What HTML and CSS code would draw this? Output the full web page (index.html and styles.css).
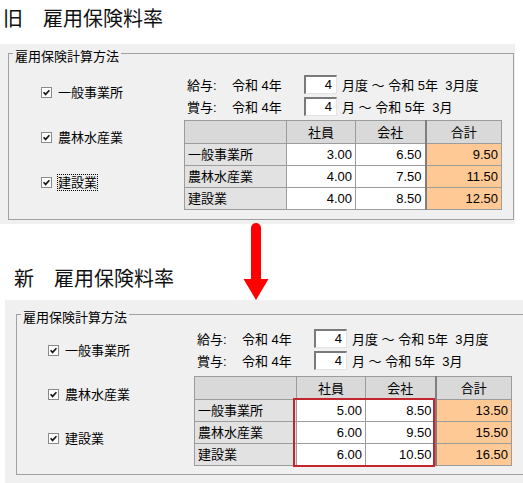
FILE: index.html
```html
<!DOCTYPE html>
<html lang="ja">
<head>
<meta charset="utf-8">
<title>雇用保険料率</title>
<link rel="stylesheet" href="styles.css">
</head>
<body>
<div class="page">
  <section class="block block--old">
    <h1 class="title">旧　雇用保険料率</h1>
    <div class="panel">
      <fieldset class="group">
        <legend class="group__legend">雇用保険計算方法</legend>
        <div class="group__body">
          <ul class="checks">
            <li class="check"><svg class="check__box" viewBox="0 0 11 11" width="11" height="11"><rect x="0.5" y="0.5" width="10" height="10" fill="#fff" stroke="#8a8a8a"/><path d="M2.6 5.2 L4.6 7.4 L8.4 3.2" fill="none" stroke="#1a1a1a" stroke-width="1.7"/></svg><span class="check__label">一般事業所</span></li>
            <li class="check"><svg class="check__box" viewBox="0 0 11 11" width="11" height="11"><rect x="0.5" y="0.5" width="10" height="10" fill="#fff" stroke="#8a8a8a"/><path d="M2.6 5.2 L4.6 7.4 L8.4 3.2" fill="none" stroke="#1a1a1a" stroke-width="1.7"/></svg><span class="check__label">農林水産業</span></li>
            <li class="check"><svg class="check__box" viewBox="0 0 11 11" width="11" height="11"><rect x="0.5" y="0.5" width="10" height="10" fill="#fff" stroke="#8a8a8a"/><path d="M2.6 5.2 L4.6 7.4 L8.4 3.2" fill="none" stroke="#1a1a1a" stroke-width="1.7"/></svg><span class="check__label check__label--focus">建設業</span></li>
          </ul>
          <div class="settings">
            <div class="period">
              <span class="period__label">給与:</span>
              <span class="period__era">令和 4年</span>
              <span class="period__input">4</span>
              <span class="period__rest">月度 ～ 令和 5年&nbsp;&nbsp;3月度</span>
            </div>
            <div class="period">
              <span class="period__label">賞与:</span>
              <span class="period__era">令和 4年</span>
              <span class="period__input">4</span>
              <span class="period__rest">月 ～ 令和 5年&nbsp;&nbsp;3月</span>
            </div>
            <div class="table-wrap">
              <table class="rates">
                <colgroup><col class="c-label"><col class="c-num"><col class="c-num2"><col class="c-total"></colgroup>
                <thead>
                  <tr><th></th><th>社員</th><th>会社</th><th class="sep">合計</th></tr>
                </thead>
                <tbody>
                  <tr><th>一般事業所</th><td>3.00</td><td>6.50</td><td class="total">9.50</td></tr>
                  <tr><th>農林水産業</th><td>4.00</td><td>7.50</td><td class="total">11.50</td></tr>
                  <tr><th>建設業</th><td>4.00</td><td>8.50</td><td class="total">12.50</td></tr>
                </tbody>
              </table>
            </div>
          </div>
        </div>
      </fieldset>
    </div>
  </section>

  <svg class="arrow" viewBox="0 0 26 77" width="26" height="77">
    <line x1="13" y1="5" x2="13" y2="60" stroke="#ff0000" stroke-width="10" stroke-linecap="round"/>
    <polygon points="0.5,56 25.5,56 13,77" fill="#ff0000"/>
  </svg>

  <section class="block block--new">
    <h1 class="title">新　雇用保険料率</h1>
    <div class="panel">
      <fieldset class="group">
        <legend class="group__legend">雇用保険計算方法</legend>
        <div class="group__body">
          <ul class="checks">
            <li class="check"><svg class="check__box" viewBox="0 0 11 11" width="11" height="11"><rect x="0.5" y="0.5" width="10" height="10" fill="#fff" stroke="#8a8a8a"/><path d="M2.6 5.2 L4.6 7.4 L8.4 3.2" fill="none" stroke="#1a1a1a" stroke-width="1.7"/></svg><span class="check__label">一般事業所</span></li>
            <li class="check"><svg class="check__box" viewBox="0 0 11 11" width="11" height="11"><rect x="0.5" y="0.5" width="10" height="10" fill="#fff" stroke="#8a8a8a"/><path d="M2.6 5.2 L4.6 7.4 L8.4 3.2" fill="none" stroke="#1a1a1a" stroke-width="1.7"/></svg><span class="check__label">農林水産業</span></li>
            <li class="check"><svg class="check__box" viewBox="0 0 11 11" width="11" height="11"><rect x="0.5" y="0.5" width="10" height="10" fill="#fff" stroke="#8a8a8a"/><path d="M2.6 5.2 L4.6 7.4 L8.4 3.2" fill="none" stroke="#1a1a1a" stroke-width="1.7"/></svg><span class="check__label">建設業</span></li>
          </ul>
          <div class="settings">
            <div class="period">
              <span class="period__label">給与:</span>
              <span class="period__era">令和 4年</span>
              <span class="period__input">4</span>
              <span class="period__rest">月度 ～ 令和 5年&nbsp;&nbsp;3月度</span>
            </div>
            <div class="period">
              <span class="period__label">賞与:</span>
              <span class="period__era">令和 4年</span>
              <span class="period__input">4</span>
              <span class="period__rest">月 ～ 令和 5年&nbsp;&nbsp;3月</span>
            </div>
            <div class="table-wrap">
              <table class="rates">
                <colgroup><col class="c-label"><col class="c-num"><col class="c-num2"><col class="c-total"></colgroup>
                <thead>
                  <tr><th></th><th>社員</th><th>会社</th><th class="sep">合計</th></tr>
                </thead>
                <tbody>
                  <tr><th>一般事業所</th><td>5.00</td><td>8.50</td><td class="total">13.50</td></tr>
                  <tr><th>農林水産業</th><td>6.00</td><td>9.50</td><td class="total">15.50</td></tr>
                  <tr><th>建設業</th><td>6.00</td><td>10.50</td><td class="total">16.50</td></tr>
                </tbody>
              </table>
              <div class="highlight"></div>
            </div>
          </div>
        </div>
      </fieldset>
    </div>
  </section>
</div>
</body>
</html>
```

FILE: styles.css
```css
html, body {
  margin: 0;
  padding: 0;
  background: #ffffff;
}

body {
  font-family: "Liberation Sans", "Noto Sans CJK JP", sans-serif;
  font-size: 13px;
  color: #000;
}

.page {
  position: relative;
  width: 523px;
  height: 483px;
  overflow: hidden;
}

/* ---------- titles ---------- */
.title {
  margin: 0;
  font-family: "Noto Sans CJK JP", sans-serif;
  font-weight: normal;
  font-size: 20px;
  line-height: 20px;
  color: #111;
}

.block--old .title {
  padding: 8px 0 0 3px;
  margin-bottom: 16px;
}

.block--new {
  margin-top: 44px;
}

.block--new .title {
  padding: 0 0 0 14px;
  margin-bottom: 12px;
}

/* ---------- panel / group box ---------- */
.panel {
  background: #f0f0f0;
  box-sizing: border-box;
}

.block--old .panel {
  width: 515px;
  padding: 0 1px 4px 8px;
}

.block--new .panel {
  width: 540px;
  height: 185px;
  margin-left: 5px;
  padding: 5px 0 0 11px;
}

.group {
  margin: 0;
  padding: 0;
  border: 1px solid #a0a0a0;
  min-width: 0;
}

.block--old .group {
  padding-bottom: 9px;
}

.block--new .group {
  width: 520px;
  padding-bottom: 8px;
}

.group__legend {
  margin-left: 4px;
  padding: 6px 2px 0;
  font-size: 13px;
  line-height: 13px;
}

.group__body {
  display: flex;
}

/* ---------- check boxes ---------- */
.checks {
  list-style: none;
  margin: 0;
  box-sizing: border-box;
  display: flex;
  flex-direction: column;
}

.block--old .checks {
  width: 175px;
  padding: 18px 0 0 32px;
  gap: 23px;
}

.block--new .checks {
  width: 177px;
  padding: 15px 0 0 31px;
  gap: 22px;
}

.check {
  display: flex;
  align-items: center;
  gap: 6px;
  height: 22px;
}

.check__box {
  display: block;
  flex: none;
}

.check__label {
  line-height: 15px;
}

.check__label--focus {
  outline: 1px dotted #000;
  outline-offset: 0;
}

/* ---------- period rows ---------- */
.settings {
  display: flex;
  flex-direction: column;
}

.block--old .settings {
  padding-top: 10px;
}

.block--new .settings {
  padding-top: 3px;
}

.period {
  display: flex;
  align-items: center;
  height: 22px;
  padding-left: 3px;
  white-space: pre;
}

.period__label {
  width: 45px;
}

.period__era {
  width: 72px;
}

.period__input {
  box-sizing: border-box;
  width: 33px;
  height: 19px;
  background: #fff;
  border-top: 2px solid #7a7a7a;
  border-left: 2px solid #7a7a7a;
  border-right: 1px solid #e3e3e3;
  border-bottom: 1px solid #e3e3e3;
  text-align: right;
  padding-right: 4px;
  line-height: 16px;
}

.period__rest {
  margin-left: 5px;
}

/* ---------- table ---------- */
.table-wrap {
  position: relative;
}

.block--old .table-wrap {
  margin-top: 3px;
}

.block--new .table-wrap {
  margin-top: 5px;
}

.rates {
  border-collapse: collapse;
  table-layout: fixed;
  width: 317px;
  border: 1px solid #7a7a7a;
}

.c-label { width: 102px; }
.c-num { width: 69px; }
.c-num2 { width: 70px; }
.c-total { width: 76px; }

.rates th,
.rates td {
  padding: 0 3px;
  height: 21px;
  border: 1px solid #9c9c9c;
  font-weight: normal;
  line-height: 15px;
  white-space: nowrap;
}

.rates thead th {
  height: 22px;
  background: #d9d9d9;
  text-align: center;
}

.rates tbody th {
  background: #e2e2e2;
  text-align: left;
}

.rates td {
  background: #fff;
  text-align: right;
}

.rates td.total {
  background: #ffc995;
}

.rates .sep,
.rates td.total {
  border-left: 2px solid #7f7f7f;
}

.highlight {
  position: absolute;
  left: 99px;
  top: 22px;
  width: 142px;
  height: 69px;
  box-sizing: border-box;
  border: 2px solid #c4262e;
}

/* ---------- arrow annotation ---------- */
.arrow {
  position: absolute;
  left: 243px;
  top: 223px;
  display: block;
}
```
